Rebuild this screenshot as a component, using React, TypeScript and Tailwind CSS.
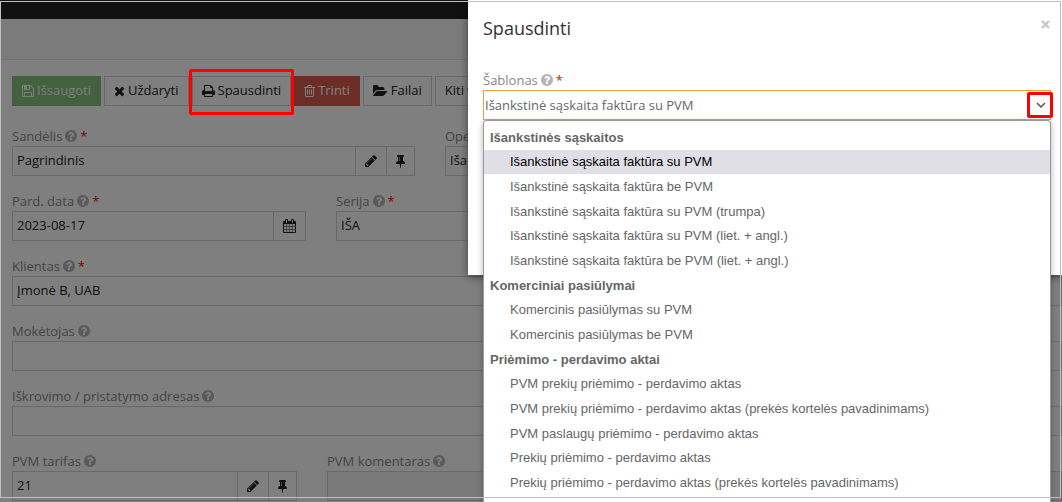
import { useState } from 'react'
import type { ReactNode } from 'react'
import clsx from 'clsx'

// x is where the glyph starts, w its width, both on a grid 1792 units tall
const icons = {
  save: {
    x: 128,
    w: 1536,
    d: 'M512 1536h768v-384h-768v384zm896 0h128v-896q0-14-10-38.5t-20-34.5l-281-281q-10-10-34-20t-39-10v416q0 40-28 68t-68 28h-576q-40 0-68-28t-28-68v-416h-128v1280h128v-416q0-40 28-68t68-28h832q40 0 68 28t28 68v416zm-384-928v-320q0-13-9.5-22.5t-22.5-9.5h-192q-13 0-22.5 9.5t-9.5 22.5v320q0 13 9.5 22.5t22.5 9.5h192q13 0 22.5-9.5t9.5-22.5zm640 32v928q0 40-28 68t-68 28h-1344q-40 0-68-28t-28-68v-1344q0-40 28-68t68-28h928q40 0 88 20t76 48l280 280q28 28 48 76t20 88z',
  },
  times: {
    x: 192,
    w: 1408,
    d: 'M1490 1322q0 40-28 68l-136 136q-28 28-68 28t-68-28l-294-294-294 294q-28 28-68 28t-68-28l-136-136q-28-28-28-68t28-68l294-294-294-294q-28-28-28-68t28-68l136-136q28-28 68-28t68 28l294 294 294-294q28-28 68-28t68 28l136 136q28 28 28 68t-28 68l-294 294 294 294q28 28 28 68z',
  },
  print: {
    x: 64,
    w: 1664,
    d: 'M448 1536h896v-256h-896v256zm0-640h896v-384h-160q-40 0-68-28t-28-68v-160h-640v640zm1152 64q0-26-19-45t-45-19-45 19-19 45 19 45 45 19 45-19 19-45zm128 0v416q0 13-9.5 22.5t-22.5 9.5h-224v160q0 40-28 68t-68 28h-960q-40 0-68-28t-28-68v-160h-224q-13 0-22.5-9.5t-9.5-22.5v-416q0-79 56.5-135.5t135.5-56.5h64v-544q0-40 28-68t68-28h672q40 0 88 20t76 48l152 152q28 28 48 76t20 88v256h64q79 0 135.5 56.5t56.5 135.5z',
  },
  trash: {
    x: 192,
    w: 1408,
    d: 'M704 736v576q0 14-9 23t-23 9h-64q-14 0-23-9t-9-23v-576q0-14 9-23t23-9h64q14 0 23 9t9 23zm256 0v576q0 14-9 23t-23 9h-64q-14 0-23-9t-9-23v-576q0-14 9-23t23-9h64q14 0 23 9t9 23zm256 0v576q0 14-9 23t-23 9h-64q-14 0-23-9t-9-23v-576q0-14 9-23t23-9h64q14 0 23 9t9 23zm128 724v-948h-896v948q0 22 7 40.5t14.5 27 10.5 8.5h832q3 0 10.5-8.5t14.5-27 7-40.5zm-672-1076h448l-48-117q-7-9-17-11h-317q-10 2-17 11zm928 32v64q0 14-9 23t-23 9h-96v948q0 83-47 143.5t-113 60.5h-832q-66 0-113-58.5t-47-141.5v-952h-96q-14 0-23-9t-9-23v-64q0-14 9-23t23-9h309l70-167q15-37 54-63t79-26h320q40 0 79 26t54 63l70 167h309q14 0 23 9t9 23z',
  },
  folder: {
    x: 0,
    w: 1920,
    d: 'M1815 952q0 31-31 66l-336 396q-43 51-120.5 86.5t-143.5 35.5h-1088q-34 0-60.5-13t-26.5-43q0-31 31-66l336-396q43-51 120.5-86.5t143.5-35.5h1088q34 0 60.5 13t26.5 43zm-343-344v160h-832q-94 0-197 47.5t-164 119.5l-337 396-5 6q0-4-.5-12.5t-.5-12.5v-960q0-92 66-158t158-66h320q92 0 158 66t66 158v32h544q92 0 158 66t66 158z',
  },
  pencil: {
    x: 128,
    w: 1536,
    d: 'M491 1536l91-91-235-235-91 91v107h128v128h107zm523-928q0-22-22-22-10 0-17 7l-542 542q-7 7-7 17 0 22 22 22 10 0 17-7l542-542q7-7 7-17zm-54-192l416 416-832 832h-416v-416zm683 96q0 53-37 90l-166 166-416-416 166-165q36-38 90-38 53 0 91 38l235 234q37 39 37 91z',
  },
  pin: {
    x: 320,
    w: 1152,
    d: 'M800 864v-448q0-14-9-23t-23-9-23 9-9 23v448q0 14 9 23t23 9 23-9 9-23zm672 352q0 26-19 45t-45 19h-429l-51 483q-2 12-10.5 20.5t-20.5 8.5h-1q-27 0-32-27l-76-485h-404q-26 0-45-19t-19-45q0-123 78.5-221.5t177.5-98.5v-512q-52 0-90-38t-38-90 38-90 90-38h640q52 0 90 38t38 90-38 90-90 38v512q99 0 177.5 98.5t78.5 221.5z',
  },
  calendar: {
    x: 64,
    w: 1664,
    d: 'M192 1664h288v-288h-288v288zm352 0h320v-288h-320v288zm-352-352h288v-320h-288v320zm352 0h320v-320h-320v320zm-352-384h288v-288h-288v288zm736 736h320v-288h-320v288zm-384-736h320v-288h-320v288zm768 736h288v-288h-288v288zm-384-352h320v-320h-320v320zm-352-864v-288q0-13-9.5-22.5t-22.5-9.5h-64q-13 0-22.5 9.5t-9.5 22.5v288q0 13 9.5 22.5t22.5 9.5h64q13 0 22.5-9.5t9.5-22.5zm736 864h288v-320h-288v320zm-384-384h320v-288h-320v288zm384 0h288v-288h-288v288zm32-480v-288q0-13-9.5-22.5t-22.5-9.5h-64q-13 0-22.5 9.5t-9.5 22.5v288q0 13 9.5 22.5t22.5 9.5h64q13 0 22.5-9.5t9.5-22.5zm384-64v1280q0 52-38 90t-90 38h-1408q-52 0-90-38t-38-90v-1280q0-52 38-90t90-38h128v-96q0-66 47-113t113-47h64q66 0 113 47t47 113v96h384v-96q0-66 47-113t113-47h64q66 0 113 47t47 113v96h128q52 0 90 38t38 90z',
  },
  question: {
    x: 128,
    w: 1536,
    d: 'M1024 1376v-192q0-14-9-23t-23-9h-192q-14 0-23 9t-9 23v192q0 14 9 23t23 9h192q14 0 23-9t9-23zm256-672q0-88-55.5-163t-138.5-116-170-41q-243 0-371 213-15 24 8 42l132 100q7 6 19 6 16 0 25-12 53-68 86-92 34-24 86-24 48 0 85.5 26t37.5 59q0 38-20 61t-68 45q-63 28-115.5 86.5t-52.5 125.5v36q0 14 9 23t23 9h192q14 0 23-9t9-23q0-19 21.5-49.5t54.5-49.5q32-18 49-28.5t46-35 44.5-48 28-60.5 12.5-81zm384 192q0 209-103 385.5t-279.5 279.5-385.5 103-385.5-103-279.5-279.5-103-385.5 103-385.5 279.5-279.5 385.5-103 385.5 103 279.5 279.5 103 385.5z',
  },
  caret: {
    x: 384,
    w: 1024,
    d: 'M1408 704q0 26-19 45l-448 448q-19 19-45 19t-45-19l-448-448q-19-19-19-45t19-45 45-19h896q26 0 45 19t19 45z',
  },
}

type IconName = keyof typeof icons

const groups = [
  {
    title: 'Išankstinės sąskaitos',
    items: [
      'Išankstinė sąskaita faktūra su PVM',
      'Išankstinė sąskaita faktūra be PVM',
      'Išankstinė sąskaita faktūra su PVM (trumpa)',
      'Išankstinė sąskaita faktūra su PVM (liet. + angl.)',
      'Išankstinė sąskaita faktūra be PVM (liet. + angl.)',
    ],
  },
  {
    title: 'Komerciniai pasiūlymai',
    items: ['Komercinis pasiūlymas su PVM', 'Komercinis pasiūlymas be PVM'],
  },
  {
    title: 'Priėmimo - perdavimo aktai',
    items: [
      'PVM prekių priėmimo - perdavimo aktas',
      'PVM prekių priėmimo - perdavimo aktas (prekės kortelės pavadinimams)',
      'PVM paslaugų priėmimo - perdavimo aktas',
      'Prekių priėmimo - perdavimo aktas',
      'Prekių priėmimo - perdavimo aktas (prekės kortelės pavadinimams)',
    ],
  },
]

function Icon({ name, className }: { name: IconName; className?: string }) {
  const { x, w, d } = icons[name]
  return (
    <svg
      viewBox={`${x} 0 ${w} 1792`}
      width={w / 128}
      height={14}
      fill="currentColor"
      aria-hidden="true"
      className={clsx('shrink-0', className)}
    >
      <path d={d} />
    </svg>
  )
}

function FieldLabel({ id, text, required }: { id: string; text: string; required?: boolean }) {
  return (
    <label htmlFor={id} className="flex h-5 items-center gap-[3px] pt-0.5 whitespace-nowrap text-[#888]">
      {text}
      <Icon name="question" className="mb-0.5 text-[#b5b5b5]" />
      {required && <span className="text-[#f00]">*</span>}
    </label>
  )
}

interface FieldProps {
  id: string
  label: string
  value?: string
  required?: boolean
  disabled?: boolean
  className?: string
  addons?: { icon: IconName; title: string }[]
}

function Field({ id, label, value = '', required, disabled, className = 'flex-1', addons = [] }: FieldProps) {
  return (
    <div className={clsx('min-w-0', className)}>
      <FieldLabel id={id} text={label} required={required} />
      <div className="flex h-[30px]">
        <input
          id={id}
          defaultValue={value}
          disabled={disabled}
          className="min-w-0 flex-1 border border-[#d2d2d2] bg-white px-1 text-[#222] disabled:bg-[#f5f5f5]"
        />
        {addons.map(addon => (
          <button
            key={addon.icon}
            type="button"
            title={addon.title}
            className="-ml-px flex items-center border border-[#d2d2d2] px-[9px] text-[#222]"
          >
            <Icon name={addon.icon} />
          </button>
        ))}
      </div>
    </div>
  )
}

function ToolbarButton({ icon, className, children }: { icon?: IconName; className?: string; children: ReactNode }) {
  return (
    <button
      type="button"
      className={clsx(
        'flex h-[30px] items-center gap-[3px] border px-[9px] whitespace-nowrap',
        className ?? 'border-[#d2d2d2] text-[#222]',
      )}
    >
      {icon && <Icon name={icon} />}
      {children}
    </button>
  )
}

function PrintDialog() {
  const [template, setTemplate] = useState(groups[0].items[0])
  const [open, setOpen] = useState(true)

  return (
    <section
      role="dialog"
      aria-labelledby="dialog-title"
      className="absolute top-0 right-0 left-[468px] z-20 bg-white pt-4 pr-[11px] pb-[155px] pl-[15px] shadow-[0_2px_8px_rgba(0,0,0,0.5)]"
    >
      <header className="flex h-[54px] items-start justify-between">
        <h2 id="dialog-title" className="text-[18px] leading-6 text-[#333]">Spausdinti</h2>
        <button type="button" aria-label="Uždaryti langą" className="pt-1 pr-px text-[#c8c8c8]">
          <svg viewBox="0 0 9 9" className="size-[9px]" stroke="currentColor" strokeWidth="2.4" aria-hidden="true">
            <path d="M1 1l7 7M8 1l-7 7" />
          </svg>
        </button>
      </header>

      <FieldLabel id="template" text="Šablonas" required />
      <div className="relative">
        <div className="flex h-[30px] border border-[#f39c3c]">
          <input
            id="template"
            role="combobox"
            aria-expanded={open}
            aria-controls="template-list"
            readOnly
            value={template}
            className="min-w-0 flex-1 px-px pt-0.5 text-[#666] outline-none"
          />
          <button
            type="button"
            aria-label="Rodyti šablonus"
            onClick={() => setOpen(!open)}
            className="relative flex w-[18px] items-center justify-center text-[#555]"
          >
            <svg viewBox="0 0 10 6" className="h-[6px] w-[10px]" fill="none" stroke="currentColor" strokeWidth="1.5" aria-hidden="true">
              <path d="M1 1l4 4 4-4" />
            </svg>
            <span className="absolute inset-y-px -right-[3px] -left-[5px] rounded-xs border-3 border-[#f00]" />
          </button>
        </div>

        {open && (
          <div
            id="template-list"
            role="listbox"
            className="absolute inset-x-0 top-full rounded-t-sm border border-b-0 border-[#999] bg-white pt-1 pb-[7px] font-['Liberation_Sans',Arial,sans-serif] text-[#666] shadow-[0_2px_6px_rgba(0,0,0,0.3)]"
          >
            {groups.map(group => (
              <div key={group.title} role="group" aria-label={group.title}>
                <div className="flex h-[25px] items-center px-[6px] font-bold">{group.title}</div>
                {group.items.map(item => (
                  <div
                    key={item}
                    role="option"
                    aria-selected={item === template}
                    onClick={() => setTemplate(item)}
                    className="flex h-[25px] cursor-default items-center px-[26px] whitespace-nowrap nth-[3n+2]:h-6 aria-selected:bg-[#e0dfe6] aria-selected:text-black"
                  >
                    {item}
                  </div>
                ))}
              </div>
            ))}
          </div>
        )}
      </div>
    </section>
  )
}

const lookup: FieldProps['addons'] = [
  { icon: 'pencil', title: 'Redaguoti' },
  { icon: 'pin', title: 'Prisegti' },
]

export default function App() {
  return (
    <div className="relative min-h-screen overflow-hidden bg-white font-['Open_Sans',sans-serif] text-[13px]">
      <div className="h-[19px] bg-[#222]" />
      <div className="h-[41px] border-b border-[#e4e4e4] bg-[#f6f6f6]" />

      <main className="px-3 pt-4">
        <div className="flex gap-[3px]">
          <ToolbarButton icon="save" className="border-[#87c07e] bg-[#87c07e] text-white">Išsaugoti</ToolbarButton>
          <ToolbarButton icon="times">Uždaryti</ToolbarButton>
          <div className="relative">
            <ToolbarButton icon="print">Spausdinti</ToolbarButton>
            <span className="pointer-events-none absolute -inset-x-[3px] -top-[7px] -bottom-[9px] z-30 rounded-xs border-3 border-[#f00]" />
          </div>
          <ToolbarButton icon="trash" className="border-[#d65a4a] bg-[#d65a4a] text-white">Trinti</ToolbarButton>
          <ToolbarButton icon="folder">Failai</ToolbarButton>
          <ToolbarButton>
            Kiti veiksmai
            <Icon name="caret" />
          </ToolbarButton>
        </div>

        <form className="-mr-3 flex flex-col gap-[15px] pt-5">
          <div className="flex gap-[30px]">
            <Field id="warehouse" label="Sandėlis" value="Pagrindinis" required className="w-[403px]" addons={lookup} />
            <Field id="operation" label="Operacija" value="Išankstinė sąskaita" required />
          </div>
          <div className="flex gap-[30px]">
            <Field
              id="date"
              label="Pard. data"
              value="2023-08-17"
              required
              className="w-[294px]"
              addons={[{ icon: 'calendar', title: 'Kalendorius' }]}
            />
            <Field id="series" label="Serija" value="IŠA" required />
          </div>
          <div className="flex">
            <Field id="client" label="Klientas" value="Įmonė B, UAB" required />
          </div>
          <div className="flex">
            <Field id="payer" label="Mokėtojas" />
          </div>
          <div className="flex">
            <Field id="address" label="Iškrovimo / pristatymo adresas" />
          </div>
          <div className="flex gap-[30px]">
            <Field id="vat" label="PVM tarifas" value="21" className="w-[285px]" addons={lookup} />
            <Field id="vat-note" label="PVM komentaras" disabled />
          </div>
        </form>
      </main>

      <div className="absolute inset-0 z-10 bg-black/50" />
      <PrintDialog />
      <div className="pointer-events-none absolute top-px right-px bottom-1 left-0 z-40 border border-[#c0c0c0]" />
    </div>
  )
}
